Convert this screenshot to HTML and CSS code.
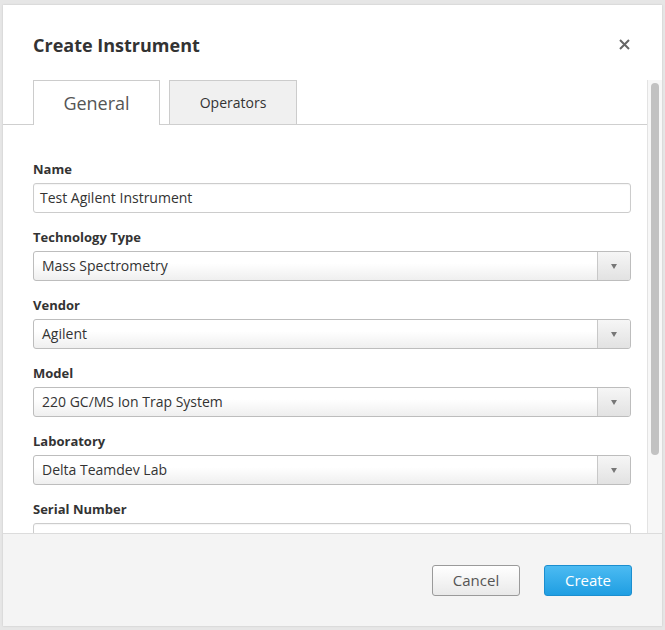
FILE: index.html
```html
<!DOCTYPE html>
<html>
<head>
<meta charset="utf-8">
<link rel="stylesheet" href="styles.css">
</head>
<body>
<div class="dialog">
  <div class="header">
    <h1 class="title">Create Instrument</h1>
    <button class="close" aria-label="Close">
      <svg width="11" height="11" viewBox="0 0 11 11"><path d="M1 1L10 10M10 1L1 10" stroke="#666" stroke-width="2" fill="none"/></svg>
    </button>
  </div>
  <div class="scroll">
    <div class="content">
      <div class="tabs">
        <div class="tab active">General</div>
        <div class="tab">Operators</div>
      </div>
      <form class="form">
        <div class="field">
          <label class="label">Name</label>
          <div class="input">Test Agilent Instrument</div>
        </div>
        <div class="field">
          <label class="label">Technology Type</label>
          <div class="select"><span class="value">Mass Spectrometry</span><span class="arrow"></span></div>
        </div>
        <div class="field">
          <label class="label">Vendor</label>
          <div class="select"><span class="value">Agilent</span><span class="arrow"></span></div>
        </div>
        <div class="field">
          <label class="label">Model</label>
          <div class="select"><span class="value">220 GC/MS Ion Trap System</span><span class="arrow"></span></div>
        </div>
        <div class="field">
          <label class="label">Laboratory</label>
          <div class="select"><span class="value">Delta Teamdev Lab</span><span class="arrow"></span></div>
        </div>
        <div class="field">
          <label class="label">Serial Number</label>
          <div class="input"></div>
        </div>
      </form>
    </div>
    <div class="scrollbar"><div class="thumb"></div></div>
  </div>
  <div class="footer">
    <button class="btn cancel">Cancel</button>
    <button class="btn primary">Create</button>
  </div>
</div>
</body>
</html>
```
FILE: styles.css
```css
* { box-sizing: border-box; }
html, body { margin: 0; padding: 0; }
body {
  background: #e6e6e6;
  font-family: "Open Sans", "Noto Sans", sans-serif;
  color: #333;
  width: 665px;
  height: 630px;
  overflow: hidden;
}
.dialog {
  margin: 5px 3px 0 3px;
  width: 659px;
  height: 621px;
  background: #fff;
  display: flex;
  flex-direction: column;
  box-shadow: 0 0 2px rgba(0,0,0,0.15);
}
.header {
  height: 75px;
  flex: none;
  display: flex;
  align-items: center;
  justify-content: space-between;
  padding: 4px 31px 0 30px;
}
.title {
  margin: 0;
  font-size: 18px;
  font-weight: 700;
  color: #333;
}
.close {
  border: 0;
  background: none;
  padding: 0;
  width: 11px;
  height: 11px;
  display: flex;
  cursor: pointer;
  margin-right: 1px;
}
.scroll {
  flex: 1;
  display: flex;
  min-height: 0;
}
.content {
  flex: 1;
  overflow: hidden;
}
.scrollbar {
  width: 15px;
  flex: none;
  background: #f7f7f7;
  border-left: 1px solid #e3e3e3;
  padding: 3px 3px 0 3px;
}
.thumb {
  height: 372px;
  background: #c2c2c2;
  border-radius: 4px;
}
.tabs {
  display: flex;
  gap: 9px;
  padding-left: 30px;
  border-bottom: 1px solid #cfcfcf;
  height: 45px;
  align-items: flex-start;
}
.tab {
  width: 128px;
  height: 44px;
  border: 1px solid #cccccc;
  border-bottom: 0;
  background: #f0f0f0;
  display: flex;
  align-items: center;
  justify-content: center;
  font-size: 14px;
  color: #333;
}
.tab.active {
  width: 127px;
  height: 45px;
  background: #fff;
  font-size: 18px;
  color: #555;
  margin-bottom: -1px;
}
.form {
  padding: 35px 16px 20px 30px;
  display: flex;
  flex-direction: column;
  gap: 15px;
}
.field {
  display: flex;
  flex-direction: column;
  gap: 5px;
}
.label {
  font-size: 13px;
  font-weight: 700;
  line-height: 18px;
  color: #333;
}
.input {
  height: 30px;
  border: 1px solid #cccccc;
  border-radius: 3px;
  padding: 0 6px;
  font-size: 14px;
  line-height: 28px;
  color: #333;
  box-shadow: inset 0 1px 1px rgba(0,0,0,0.04);
}
.select {
  height: 30px;
  border: 1px solid #bdbdbd;
  border-radius: 3px;
  display: flex;
  background: linear-gradient(#ffffff 40%, #efefef);
  font-size: 14px;
  line-height: 28px;
  color: #333;
  overflow: hidden;
}
.select .value {
  flex: 1;
  padding-left: 8px;
}
.select .arrow {
  width: 33px;
  border-left: 1px solid #c8c8c8;
  background: linear-gradient(#f6f6f6, #e2e2e2);
  position: relative;
}
.select .arrow::after {
  content: "";
  position: absolute;
  left: 13px;
  top: 12px;
  border-left: 3.5px solid transparent;
  border-right: 3.5px solid transparent;
  border-top: 5px solid #777;
}
.footer {
  flex: none;
  height: 93px;
  border-top: 1px solid #dcdcdc;
  background: #f4f4f4;
  display: flex;
  align-items: center;
  justify-content: flex-end;
  gap: 24px;
  padding: 0 30px 0 0;
}
.btn {
  width: 88px;
  height: 31px;
  border-radius: 3px;
  font-family: "Open Sans", "Noto Sans", sans-serif;
  font-size: 15px;
  padding: 0;
  cursor: pointer;
}
.cancel {
  border: 1px solid #9a9a9a;
  background: linear-gradient(#ffffff, #e9e9e9);
  color: #555;
}
.primary {
  border: 1px solid #1b8ecf;
  background: linear-gradient(#4cbbf2, #1f9ee2);
  color: #fff;
}
```
